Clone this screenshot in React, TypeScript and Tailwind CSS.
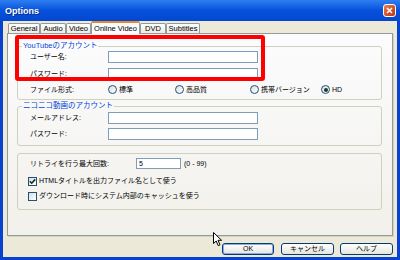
import React from "react";

const tabs = [
  { label: "General", w: "w-[32px]" },
  { label: "Audio", w: "w-[26px]" },
  { label: "Video", w: "w-[25px]" },
  { label: "Online Video", w: "w-[49px]", active: true },
  { label: "DVD", w: "w-[26px]" },
  { label: "Subtitles", w: "w-[34px]" },
];

function TextBox({ className = "", value = "" }: { className?: string; value?: string }) {
  return (
    <div
      className={`h-full border border-[#7f9db9] bg-white text-[7px] leading-[10px] pl-[2px] ${className}`}
    >
      {value}
    </div>
  );
}

function Radio({ checked = false }: { checked?: boolean }) {
  return (
    <span className="w-[9px] h-[9px] rounded-full border border-[#1c5180] bg-gradient-to-br from-[#dcdcd6] to-white flex items-center justify-center shrink-0">
      {checked && <span className="w-[4px] h-[4px] rounded-full bg-[#1e3a1e]" />}
    </span>
  );
}

function Check({ checked = false }: { checked?: boolean }) {
  return (
    <span className="w-[9px] h-[9px] border border-[#1c5180] bg-gradient-to-br from-[#dcdcd6] to-white flex items-center justify-center shrink-0">
      {checked && (
        <svg width="7" height="7" viewBox="0 0 7 7">
          <path d="M0.8 3.3 L2.7 5.2 L6.2 1.4" stroke="#1d2a20" strokeWidth="1.6" fill="none" />
        </svg>
      )}
    </span>
  );
}

function FieldRow({ label, className = "" }: { label: string; className?: string }) {
  return (
    <div className={`flex items-center h-[12px] ${className}`}>
      <span className="w-[78px] shrink-0 text-[7px] leading-[10px]">{label}</span>
      <div className="w-[150px] h-full">
        <TextBox />
      </div>
    </div>
  );
}

export default function App() {
  return (
    <div className="relative w-[400px] h-[260px] bg-[#0842d0] flex flex-col overflow-hidden text-black font-['Liberation_Sans','Noto_Sans_CJK_JP',sans-serif]">
      {/* title bar */}
      <div className="h-[21px] shrink-0 flex items-center justify-between pl-[5px] pr-[4px] bg-gradient-to-b from-[#2f7ef0] via-[#0651dc] to-[#0447d0]">
        <span className="text-white font-bold text-[9px] leading-[12px] [text-shadow:1px_1px_0_#0a2a8a]">
          Options
        </span>
        <div className="w-[13px] h-[13px] rounded-[3px] border border-white bg-gradient-to-br from-[#e8805a] via-[#d8542a] to-[#b83810] flex items-center justify-center">
          <svg width="7" height="7" viewBox="0 0 7 7">
            <path d="M1 1 L6 6 M6 1 L1 6" stroke="white" strokeWidth="1.5" />
          </svg>
        </div>
      </div>

      {/* body */}
      <div className="flex-1 mx-[3px] mb-[3px] bg-[#ece9d8] flex flex-col">
        <div className="h-[12px] flex items-end pl-[5px] relative z-10">
          {tabs.map((t) =>
            t.active ? (
              <div
                key={t.label}
                className={`${t.w} h-[13px] -mb-px border-x border-[#919b9c] border-t-2 border-t-[#e68b2c] rounded-t-[2px] bg-[#fcfcfe] flex items-center justify-center text-[7.5px] leading-[9px]`}
              >
                {t.label}
              </div>
            ) : (
              <div
                key={t.label}
                className={`${t.w} h-[10px] border border-b-0 border-[#919b9c] rounded-t-[2px] bg-gradient-to-b from-white to-[#ecebe5] flex items-center justify-center text-[7.5px] leading-[9px]`}
              >
                {t.label}
              </div>
            )
          )}
        </div>

        {/* tab panel */}
        <div className="h-[203px] ml-[4px] mr-[4px] border border-[#919b9c] shadow-[1px_1px_0_#d6d3c4] bg-gradient-to-b from-[#fcfcfe] to-[#f1f0ea] pl-[9px] pr-[10px] pt-[7px] flex flex-col">
          <fieldset className="border border-[#d0d0bf] rounded-[3px] pb-[4px]">
            <legend className="ml-[4px] px-[1px] text-[#0046d5] text-[7.5px] leading-[10px]">
              YouTubeのアカウント
            </legend>
            <div className="pl-[12px] flex flex-col">
              <FieldRow label="ユーザー名:" />
              <FieldRow label="パスワード:" className="mt-[5px]" />
              <div className="mt-[4px] h-[11px] flex items-center text-[7px] leading-[10px]">
                <span className="w-[78px] shrink-0">ファイル形式:</span>
                <span className="w-[67px] flex items-center gap-[2px]">
                  <Radio /> 標準
                </span>
                <span className="w-[75px] flex items-center gap-[2px]">
                  <Radio /> 高品質
                </span>
                <span className="w-[71px] flex items-center gap-[2px]">
                  <Radio /> 携帯バージョン
                </span>
                <span className="flex items-center gap-[2px]">
                  <Radio checked /> HD
                </span>
              </div>
            </div>
          </fieldset>

          <fieldset className="mt-[1px] border border-[#d0d0bf] rounded-[3px] pb-[5px]">
            <legend className="ml-[4px] px-[1px] text-[#0046d5] text-[7.5px] leading-[10px]">
              ニコニコ動画のアカウント
            </legend>
            <div className="pl-[12px] pt-[1px] flex flex-col">
              <FieldRow label="メールアドレス:" />
              <FieldRow label="パスワード:" className="mt-[4px]" />
            </div>
          </fieldset>

          <div className="mt-[7px] border border-[#d0d0bf] rounded-[3px] pt-[4px] pb-[8px] pl-[10px] flex flex-col text-[7px] leading-[10px]">
            <div className="h-[11px] flex items-center pl-[2px]">
              <span className="w-[106px] shrink-0">リトライを行う最大回数:</span>
              <div className="w-[45px] h-full">
                <TextBox value="5" />
              </div>
              <span className="ml-[3px]">(0 - 99)</span>
            </div>
            <div className="mt-[7px] h-[10px] flex items-center gap-[2px]">
              <Check checked />
              <span>HTMLタイトルを出力ファイル名として使う</span>
            </div>
            <div className="mt-[5px] h-[10px] flex items-center gap-[2px]">
              <Check />
              <span>ダウンロード時にシステム内部のキャッシュを使う</span>
            </div>
          </div>
        </div>

        {/* buttons */}
        <div className="mt-[7px] h-[12px] flex justify-end pr-[4px] text-[7px] leading-[10px]">
          <button className="w-[52px] h-full rounded-[3px] border border-[#003c74] shadow-[inset_0_0_0_1px_#8fa9ee] bg-gradient-to-b from-white to-[#e6e5de]">
            OK
          </button>
          <button className="ml-[7px] w-[53px] h-full rounded-[3px] border border-[#003c74] bg-gradient-to-b from-white to-[#e6e5de]">
            キャンセル
          </button>
          <button className="ml-[6px] w-[53px] h-full rounded-[3px] border border-[#003c74] bg-gradient-to-b from-white to-[#e6e5de]">
            ヘルプ
          </button>
        </div>
      </div>

      {/* annotation box */}
      <div className="absolute left-[15px] top-[35px] w-[250px] h-[46px] border-[4px] border-[#ff0000] rounded-[3px]" />

      {/* mouse pointer */}
      <svg className="absolute left-[213px] top-[232px]" width="10" height="15" viewBox="0 0 10 15">
        <path d="M0.5 0.5 L0.5 11.5 L3.2 9 L5.2 13.6 L7 12.8 L5 8.3 L8.6 8.3 Z" fill="white" stroke="black" strokeWidth="1" />
      </svg>
    </div>
  );
}
